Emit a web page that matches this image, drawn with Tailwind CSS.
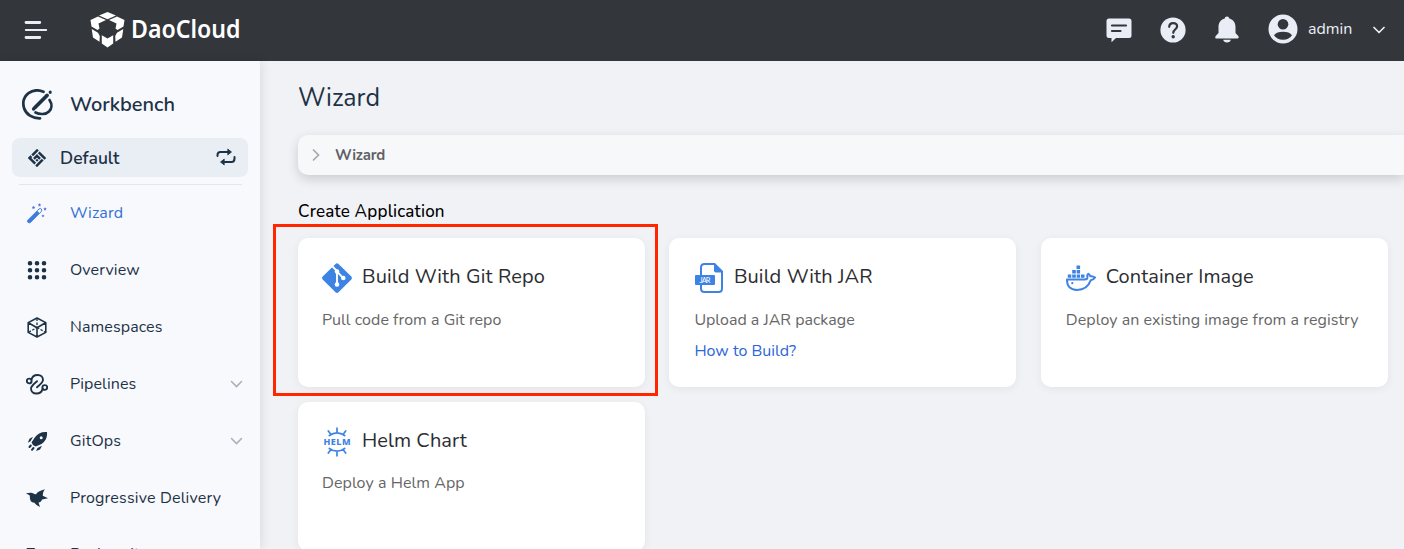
<!DOCTYPE html>
<html lang="en">
<head>
<meta charset="utf-8">
<title>DaoCloud Workbench</title>
<script src="https://cdn.jsdelivr.net/npm/@tailwindcss/browser@4"></script>
</head>
<body class="flex h-[549px] w-[1404px] flex-col overflow-hidden bg-[#f1f2f6] font-['Nunito','Lato',sans-serif] text-base text-[#1e3246]">

<header class="flex h-[61px] shrink-0 items-center bg-[#33363b] pb-0.5 text-[#e9eef6]">
  <svg class="ml-6 h-6 w-6" viewBox="0 0 24 24" stroke="currentColor" stroke-linecap="round"><path d="M2 4.500H15.800M2 19.500H15.800" stroke-width="2.800"/><path d="M1.800 12H22.200" stroke-width="2"/></svg>
  <svg class="ml-[42px] h-9 w-[35px]" viewBox="0 0 35 36" fill="#fff"><path d="M17.500 0 26 3.500 17.500 7.200 9 3.500ZM8 4.500 16 8 8.500 11.500 9.500 16.500 7.500 18 1.500 14.500.500 8ZM27 4.500 34.500 8 33.500 14.500 27.500 18 25.500 16.500 26.500 11.500 19 8ZM1.700 17 8 20.700 9.800 24 9.500 29.800 3 25.500ZM33.300 17 32 25.500 25.500 29.800 25.200 24 27 20.700ZM11.800 23.200 17.500 26.500 23.200 23.200V31.500L17.500 35.500 11.800 31.500Z"/></svg>
  <span class="mb-[4px] ml-1.5 flex-1 origin-left scale-x-[.89] font-['Noto_Sans'] text-[26px] leading-[36px] font-semibold text-white">DaoCloud</span>
  <div class="flex items-center">
    <svg class="h-[26px] w-[26px]" viewBox="0 0 26 26"><path d="M3 1.500H23Q25.500 1.500 25.500 4V18.500Q25.500 21 23 21H10L5.500 25.300V21H3Q.500 21 .500 18.500V4Q.500 1.500 3 1.500Z" fill="currentColor"/><path d="M6 8.500H20M6 14H14.500" stroke="#33363b" stroke-width="2.200" stroke-linecap="round"/></svg>
    <svg class="ml-7 h-[26px] w-[26px]" viewBox="0 0 26 26"><circle cx="13" cy="13" r="12.600" fill="currentColor"/><path d="M9.200 9.800C9.300 7.500 10.800 6.100 13.100 6.100C15.500 6.100 17.100 7.500 17.100 9.500C17.100 12.100 13.300 12.500 13.300 15.800" fill="none" stroke="#33363b" stroke-width="2.200" stroke-linecap="round"/><circle cx="13.200" cy="19.700" r="1.700" fill="#33363b"/></svg>
    <svg class="ml-7 h-[27px] w-[26px]" viewBox="0 0 26 27" fill="currentColor"><path d="M13 .600C14.300.600 15 1.300 15.200 2.500C19.500 3.500 21.500 7 21.500 11V17L24.500 20.200Q25.300 22.500 23.500 22.500H2.500Q.700 22.500 1.500 20.200L4.500 17V11C4.500 7 6.500 3.500 10.800 2.500C11 1.300 11.700.600 13 .600ZM9.200 23.700H16.800C16.500 25.500 15 26.500 13 26.500S9.500 25.500 9.200 23.700Z"/></svg>
    <svg class="mb-0.5 ml-7 h-[30px] w-[30px]" viewBox="0 0 30 30"><circle cx="15" cy="15" r="14.500" fill="currentColor"/><circle cx="15" cy="10.300" r="5.300" fill="#33363b"/><path d="M6 21.300C7.600 18.900 11 17.800 15 17.800S22.400 18.900 24 21.300C22.300 24 19.300 25.800 15 25.800S7.700 24 6 21.300Z" fill="#33363b"/></svg>
    <span class="mb-0.5 ml-[10px] w-[65px]">admin</span>
    <svg class="mr-[19px] h-3 w-3" viewBox="0 0 12 12" fill="none" stroke="currentColor" stroke-width="1.700" stroke-linecap="round" stroke-linejoin="round"><path d="M1 3.500 6 8.500 11 3.500"/></svg>
  </div>
</header>

<div class="flex min-h-0 flex-1">
  <aside class="relative w-[260px] shrink-0 overflow-y-clip bg-[#f7f9fd] shadow-[2px_0_10px_rgba(0,0,0,0.09)]">
    <div class="flex h-[77px] items-center pt-[10px] pl-[22px]">
      <svg class="h-8 w-8" viewBox="0 0 32 32" fill="none" stroke="currentColor" stroke-width="2.700" stroke-linecap="round"><path d="M21.500 2.800C17 .900 11 .800 6.500 4.200C1.800 7.800.500 13.500 2 19C4 25.500 10.500 29.500 18 29.300"/><path d="M27.500 11C30.500 15.500 29.800 20 27 22.500C24 25.500 18 25.800 13.500 23.500"/><path d="M13.500 18 25 6.500" stroke-width="3.800"/><path d="M11.500 20 13 18.500M28.200 3.200V3.300" stroke-width="3.200"/></svg>
      <h2 class="ml-4 pt-px text-xl font-semibold">Workbench</h2>
    </div>
    <div class="mx-3 flex h-[39px] items-center rounded-lg bg-[#e9eef5] px-3">
      <svg class="ml-1 h-[18px] w-[18px]" viewBox="0 0 18 18" fill="currentColor"><g transform="rotate(45 9 9)"><path d="M2.500 2.500H5V10.500H2.500ZM6.200 2.500H15.500V5H6.200ZM13 6.200H15.500V15.500H13ZM2.500 11.700H5V13H11.700V15.500H2.500ZM6.200 6.200H8.600V11.700H6.200ZM7.500 6.200H11.700V8.600H7.500ZM9.600 9.600H11.700V11.700H9.600Z"/></g></svg>
      <span class="mt-px ml-[14px] flex-1 text-[17.500px] font-semibold">Default</span>
      <svg class="mb-px h-[18px] w-5" viewBox="0 0 20 18" fill="none" stroke="currentColor" stroke-width="2" stroke-linecap="round"><path d="M1.500 8V7Q1.500 4 4.500 4H13M18.500 9V10.500Q18.500 14 15.500 14H7"/><path d="M12 1.300 15.500 4 12 6.700ZM8 11.300 4.500 14 8 16.700Z" fill="currentColor" stroke-width=".8"/></svg>
    </div>
    <hr class="mt-[7px] mr-[18px] ml-[19px] border-[#e3e6eb]">
    <nav class="-mt-px">
      <a class="flex h-[57px] items-center pl-[26px] text-[#3370d4]">
        <svg class="h-[22px] w-[22px]" viewBox="0 0 22 22" fill="#3d7be0"><path d="M1.900 20.300Q.700 19.200 2 17.900L11 8.900 13.500 11.400 4.700 20.300Q3.200 21.600 1.900 20.300Z" stroke="#3d7be0" stroke-width=".8"/><path d="M11.200 8.700 13 7Q14.300 5.900 15.300 7T15.300 9.600L13.500 11.300" fill="none" stroke="#3d7be0"/><g fill="#5a6fe0"><path d="M13.500 1 14 2.200 15.300 2.400 14.300 3.300 14.600 4.600 13.500 4 12.400 4.600 12.700 3.300 11.700 2.400 13 2.200ZM7.500 3.600 8 4.800 9.300 5 8.300 5.900 8.600 7.200 7.500 6.600 6.400 7.200 6.700 5.900 5.700 5 7 4.800ZM19 5 19.500 6.200 20.800 6.400 19.800 7.300 20.100 8.600 19 8 17.900 8.600 18.200 7.300 17.200 6.400 18.500 6.200ZM17 12.300 17.400 13.300 18.500 13.500 17.700 14.200 17.900 15.300 17 14.800 16.100 15.300 16.300 14.200 15.500 13.500 16.600 13.300Z"/></g></svg>
        <span class="ml-[22px] tracking-[.1px]">Wizard</span>
      </a>
      <a class="flex h-[57px] items-center pl-[26px]">
        <svg class="h-[22px] w-[22px]" viewBox="0 0 22 22" stroke="currentColor" stroke-width="4.600" stroke-linecap="round"><path d="M4 4.200h.01M11 4.200h.01M18 4.200h.01M4 11.200h.01M11 11.200h.01M18 11.200h.01M4 18.200h.01M11 18.200h.01M18 18.200h.01"/></svg>
        <span class="ml-[22px] tracking-[.1px]">Overview</span>
      </a>
      <a class="flex h-[57px] items-center pl-[26px]">
        <svg class="h-[22px] w-[22px]" viewBox="0 0 22 22" fill="none" stroke="currentColor" stroke-width="1.600" stroke-linejoin="round"><path d="M11 2 19.800 6.600V16.400L11 21 2.200 16.400V6.600ZM2.400 6.800 11 11.700 19.600 6.800M11 11.700V21"/><path d="M11 2.500V11.500L3 16M11 11.500 19 16" stroke-width="1.300" stroke-dasharray="2.500 1.500"/></svg>
        <span class="ml-[22px] tracking-[.1px]">Namespaces</span>
      </a>
      <a class="flex h-[57px] items-center pr-[17px] pl-[26px]">
        <svg class="h-[22px] w-[22px]" viewBox="0 0 22 22" fill="none" stroke="currentColor" stroke-width="1.900" stroke-linecap="round"><circle cx="3.200" cy="8" r="2.400"/><circle cx="18.800" cy="14.500" r="2.400"/><path d="M5.500 6.500C7 .300 17 .500 17 7C17 9.200 15.500 10.300 11 14.300"/><path d="M16.500 16C15 22.200 5 22 5 15.500C5 13.300 6.500 12.200 11 8.200"/></svg>
        <span class="ml-[22px] flex-1 tracking-[.1px]">Pipelines</span>
        <svg class="h-3 w-[13px]" viewBox="0 0 13 12" fill="none" stroke="#a9b0b9" stroke-width="1.600" stroke-linecap="round"><path d="M1.500 3.500 6.500 8.500 11.500 3.500"/></svg>
      </a>
      <a class="flex h-[57px] items-center pr-[17px] pl-[26px]">
        <svg class="h-[22px] w-[22px]" viewBox="0 0 22 22" fill="currentColor"><path fill-rule="evenodd" d="M21 2C15.500 1.500 11.500 3.500 8.800 7.500L5.500 12.500Q6.500 15.500 9.500 16.500L15 14.200C19.500 11.500 21.500 7.500 21 2ZM15.200 6.300A1.500 1.500 0 1 1 15.200 9.300A1.500 1.500 0 1 1 15.200 6.300Z"/><path d="M7 6.800 3.500 8.800 1.800 12.800 4.500 11.200ZM16 15.800 14 19.500 10 21 11.500 18Z"/><path d="M4.800 15.500 3.500 17M7.500 18 6 19.800" stroke="currentColor" stroke-width="2" stroke-linecap="round"/></svg>
        <span class="ml-[22px] flex-1 tracking-[.15px]">GitOps</span>
        <svg class="h-3 w-[13px]" viewBox="0 0 13 12" fill="none" stroke="#a9b0b9" stroke-width="1.600" stroke-linecap="round"><path d="M1.500 3.500 6.500 8.500 11.500 3.500"/></svg>
      </a>
      <a class="flex h-[57px] items-center pl-[26px]">
        <svg class="h-[22px] w-[22px]" viewBox="0 0 22 22" fill="currentColor"><path d="M0 6.300 4.500 5.800C7 5.500 8 7.500 10 7.200C11.500 5 14.500 3.300 19 2.300C17.500 4 16.800 6 16.800 8.800L22 11.200 16 12.500C15.500 14.500 14 15.200 12.500 15.500L14 20C10.500 18.500 9.500 17 8.500 15.800C5 15.500 3.800 13.500 3.800 8.500Z"/></svg>
        <span class="ml-[22px] tracking-[.17px]">Progressive Delivery</span>
      </a>
      <a class="flex h-[57px] items-center pl-[26px]">
        <svg class="h-[22px] w-[22px]" viewBox="0 0 22 22" fill="none" stroke="currentColor" stroke-width="2" stroke-linejoin="round"><path d="M1.500 19V5H8L10.500 8H20V19Z"/></svg>
        <span class="mb-px ml-[22px]">Basic units</span>
      </a>
    </nav>
  </aside>

  <main class="min-w-0 flex-1 overflow-hidden pl-[38px]">
    <h1 class="mt-[19px] h-[35px] text-[25px] leading-9">Wizard</h1>
    <div class="mt-5 flex h-10 items-center rounded-l-[10px] bg-[#f7f8fa] pl-3 text-[#5f6164] shadow-[0_4px_12px_rgba(0,0,0,0.16)]">
      <svg class="h-3 w-3" viewBox="0 0 12 12" fill="none" stroke="#a4a9b0" stroke-width="1.700" stroke-linecap="round"><path d="M3.500 1 8.500 6 3.500 11"/></svg>
      <span class="ml-[13px] text-[15px] font-bold tracking-[-.2px]">Wizard</span>
    </div>
    <h3 class="mt-[25px] h-[23px] text-[17px] leading-6 font-medium tracking-[.2px] text-black">Create Application</h3>
    <section class="mt-[15px] grid grid-cols-[347px_347px_347px] gap-x-[24.4px] gap-y-[15px] text-[#666]">
      <article class="relative h-[149px] rounded-[10px] bg-white px-6 pt-6 shadow-[0_2px_10px_rgba(0,0,0,0.06)]">
        <div class="pointer-events-none absolute -top-[14px] -left-[25px] h-[172px] w-[385px] border-[3px] border-[#ff2600]"></div>
        <div class="flex h-8 items-center">
          <svg class="h-[30px] w-[30px]" viewBox="0 0 30 30"><path d="M13.500.900Q15 -.300 16.500.900L29.300 13.500Q30.500 15 29.300 16.500L16.500 29.300Q15 30.500 13.500 29.300L.700 16.500Q-.500 15 .700 13.500Z" fill="#3d83e3"/><path d="M10.500 3.500 15 8V22M15 8.500 21 14.800" fill="none" stroke="#fff" stroke-width="1.900"/><g fill="#fff"><circle cx="15" cy="8.500" r="2.300"/><circle cx="15" cy="21.500" r="2.300"/><circle cx="21.300" cy="15" r="2.300"/></g></svg>
          <h4 class="mb-[3px] ml-2.5 text-xl tracking-[.12px] text-[#2b2d30]">Build With Git Repo</h4>
        </div>
        <p class="mt-[14px] leading-6 tracking-[.04px]">Pull code from a Git repo</p>
      </article>
      <article class="h-[149px] rounded-[10px] bg-white px-[25px] pt-6 shadow-[0_2px_10px_rgba(0,0,0,0.06)]">
        <div class="flex h-8 items-center">
          <svg class="ml-px h-[30px] w-[30px]" viewBox="0 0 30 30"><path d="M9.500 1H19.500L27 8.500V25.500Q27 29 23.500 29H9.500Q6 29 6 25.500V4.500Q6 1 9.500 1Z" fill="#fff" stroke="#3d83e3" stroke-width="2"/><path d="M19 1 27.500 9.500H21Q19 9.500 19 7.500Z" fill="#3d83e3"/><rect y="12" width="20" height="10" rx="1" fill="#3d83e3"/><text x="4.500" y="19.700" font-family="Lato" font-size="7.500" fill="#fff" textLength="11">JAR</text></svg>
          <h4 class="mb-[3px] ml-[8.500px] text-xl tracking-[.12px] text-[#2b2d30]">Build With JAR</h4>
        </div>
        <p class="mt-[14px] leading-6">Upload a JAR package</p>
        <a class="mt-[7px] block leading-6 text-[#2b66d9]">How to Build?</a>
      </article>
      <article class="h-[149px] rounded-[10px] bg-white px-6 pt-6 shadow-[0_2px_10px_rgba(0,0,0,0.06)]">
        <div class="flex h-8 items-center">
          <svg class="ml-px h-[30px] w-[30px]" viewBox="0 0 30 30"><path d="M10.500 2.500h3.600v3.600h-3.600zM6.200 7h3.600v3.500H6.200zM10.700 7h3.400v3.500h-3.400zM1.800 11.400h3.500v3.300H1.800zM6.200 11.400h3.600v3.300H6.200zM10.700 11.400h3.400v3.300h-3.400zM15 11.400h3.500v3.300H15z" fill="#3d83e3"/><path d="M1 16.500H18.500C21 16.500 21.800 15.500 21.300 13.300Q21 12 22.300 10.700Q24 12 24.300 13.300Q27 12.900 29 14.500Q27.500 17 24.800 17.200C22.500 23.500 18 27 11 27C4 27 .800 23 1 16.500Z" fill="none" stroke="#3d83e3" stroke-width="2" stroke-linejoin="round"/><circle cx="6.300" cy="20.200" r="1.100" fill="#3d83e3"/></svg>
          <h4 class="mb-[3px] ml-2.5 text-xl tracking-[.06px] text-[#2b2d30]">Container Image</h4>
        </div>
        <p class="mt-[14px] ml-px leading-6 tracking-[.06px] whitespace-nowrap">Deploy an existing image from a registry</p>
      </article>
      <article class="h-[149px] rounded-[10px] bg-white px-6 pt-6 shadow-[0_2px_10px_rgba(0,0,0,0.06)]">
        <div class="flex h-8 items-center">
          <svg class="h-[30px] w-[30px]" viewBox="0 0 30 30" fill="none" stroke="#3d83e3" stroke-width="1.700" stroke-linecap="round"><path d="M7.300 8.500Q11 5.800 15 5.800T22.700 8.500M15 1.200V5.800M6.300 4 9 7.600M23.700 4 21 7.600M7.300 21.500Q11 24.200 15 24.200T22.700 21.500M15 24.200V28.800M6.300 26 9 22.400M23.700 26 21 22.400"/><text x="1.500" y="18.200" font-family="Noto Sans" font-weight="800" font-size="9" fill="#3d83e3" stroke="none" textLength="27">HELM</text></svg>
          <h4 class="mb-[3px] ml-2.5 text-xl tracking-[.06px] text-[#2b2d30]">Helm Chart</h4>
        </div>
        <p class="mt-[13px] leading-6 tracking-[.06px]">Deploy a Helm App</p>
      </article>
    </section>
  </main>
</div>
</body>
</html>
